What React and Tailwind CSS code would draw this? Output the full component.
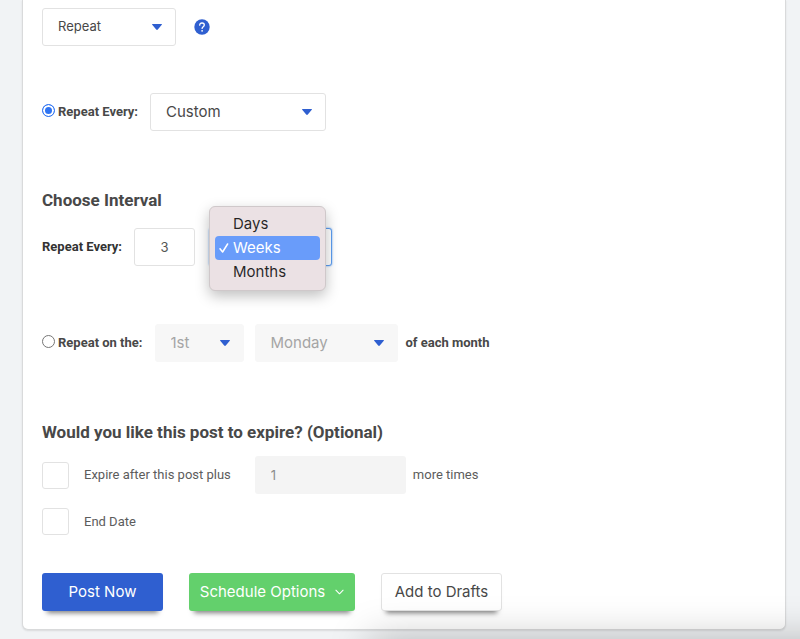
import { useState } from 'react';
import clsx from 'clsx';

const INTERVALS = ['Days', 'Weeks', 'Months'];

const Caret = () => (
  <svg
    viewBox="0 0 10 6"
    className="w-[10px] h-[6px] absolute right-[14px] top-4 pointer-events-none fill-[#2f5fd0]"
    aria-hidden="true"
  >
    <path d="M0.5 0h9c.5 0 .6.5.3.8L5.8 5.5c-.5.5-1.100.5-1.600 0L.2.8C-.1.5 0 0 .5 0z" />
  </svg>
);

const Select = ({ label, className, options, ...props }) => (
  <div className={clsx('relative h-[38px]', className)}>
    <select
      aria-label={label}
      className="appearance-none w-full h-full pl-[15px] pr-6 rounded-[3px] border border-[#e2e2e2] bg-white text-[#484848] focus:outline-none disabled:border-[#f7f7f7] disabled:bg-[#f7f7f7] disabled:text-[#a5a5a5] disabled:opacity-100"
      {...props}
    >
      {options.map((option) => (
        <option key={option}>{option}</option>
      ))}
    </select>
    <Caret />
  </div>
);

const RadioLabel = ({ children, ...props }) => (
  <label className="flex items-center gap-[3px] text-[13px] font-bold text-[#484848]">
    <input
      type="radio"
      name="repeat"
      className="appearance-none w-[13px] h-[13px] mb-[3px] rounded-full border border-[#767676] bg-white checked:border-[#2f74f2] checked:bg-[#2f74f2] checked:shadow-[inset_0_0_0_2px_#fff]"
      {...props}
    />
    {children}
  </label>
);

const CheckLabel = ({ children }) => (
  <label className="flex items-center gap-[15px] text-[13px] text-[#5c5c5c]">
    <input
      type="checkbox"
      className="appearance-none w-[27px] h-[27px] rounded-[3px] border border-[#e2e2e2] bg-white checked:bg-[#2f5fd0]"
    />
    {children}
  </label>
);

const IntervalMenu = ({ value, onChange }) => (
  <ul
    role="listbox"
    aria-label="Interval"
    className="absolute left-0 -top-[22px] w-[117px] h-[85px] p-[5px] rounded-md bg-[#ebe1e4] border border-[#cfc8ca] shadow-[0_5px_14px_rgba(0,0,0,0.25)] text-black/85"
  >
    {INTERVALS.map((item) => (
      <li
        key={item}
        role="option"
        aria-selected={item === value}
        onClick={() => onChange(item)}
        className={clsx(
          'relative flex items-center h-6 pl-[18px] rounded-[4px]',
          item === value && 'bg-[#699cfa] text-white'
        )}
      >
        {item === value && (
          <svg viewBox="0 0 10 10" className="w-[10px] h-[10px] absolute left-1" fill="none" stroke="currentColor" strokeWidth="1.500" strokeLinecap="round" strokeLinejoin="round">
            <path d="M1 5.800L3.600 9 8.600 1" />
          </svg>
        )}
        {item}
      </li>
    ))}
  </ul>
);

const App = () => {
  const [mode, setMode] = useState('every');
  const [interval, setInterval] = useState('Weeks');

  return (
    <div className="relative min-h-screen overflow-hidden pl-[22px] pr-[14px] pb-[9px] bg-[#f1f3f5] font-[Roboto,sans-serif] text-[15px]">
      <form className="pt-2 pb-[18px] pl-[19px] pr-4 bg-white border border-t-0 border-[#d9dadb] rounded-b-md shadow-[0_1px_2px_rgba(0,0,0,0.1)]">
        <div className="flex items-center gap-[18px] font-[Inter,sans-serif]">
          <Select label="Post schedule" className="w-[134px] text-[13px]" options={['Repeat', 'Once']} />
          <button type="button" aria-label="Help">
            <svg viewBox="0 0 16 16" className="w-4 h-4">
              <circle cx="8" cy="8" r="7.700" fill="#2f5fd0" />
              <path d="M5.700 6.200c0-1.400 1-2.200 2.300-2.200s2.300.8 2.300 2c0 1.700-2.200 1.700-2.200 3.400" fill="none" stroke="#fff" strokeWidth="1.300" strokeLinecap="round" />
              <circle cx="8.100" cy="11.800" r="0.900" fill="#fff" />
            </svg>
          </button>
        </div>

        <div className="flex items-center gap-3 mt-[47px]">
          <RadioLabel checked={mode === 'every'} onChange={() => setMode('every')}>
            Repeat Every:
          </RadioLabel>
          <Select
            label="Repeat frequency"
            className="w-[176px] font-[Inter,sans-serif]"
            options={['Custom', 'Daily', 'Weekly']}
          />
        </div>

        <h2 className="mt-[57px] text-[17px] leading-6 font-bold text-[#484848]">Choose Interval</h2>
        <div className="flex items-center mt-4">
          <label htmlFor="count" className="text-[13px] font-bold text-[#333]">
            Repeat Every:
          </label>
          <input
            id="count"
            defaultValue="3"
            className="w-[61px] h-[38px] ml-3 mr-[14px] rounded-[3px] border border-[#e2e2e2] text-center text-[13px] text-[#555] font-[Inter,sans-serif]"
          />
          <div className="relative font-[Inter,sans-serif]">
            <select
              aria-label="Interval unit"
              value={interval}
              onChange={(e) => setInterval(e.target.value)}
              className="appearance-none block w-[123px] h-[38px] pl-[15px] rounded-[3px] border border-[#5b9cf0] bg-white shadow-[0_0_2px_#5b9cf0]"
            >
              {INTERVALS.map((item) => (
                <option key={item}>{item}</option>
              ))}
            </select>
            <IntervalMenu value={interval} onChange={setInterval} />
          </div>
        </div>

        <div className="flex items-center mt-[58px]">
          <RadioLabel checked={mode === 'month'} onChange={() => setMode('month')}>
            Repeat on the:
          </RadioLabel>
          <div className="flex gap-[11px] ml-3 mr-2 font-[Inter,sans-serif]">
            <Select label="Week of month" className="w-[89px]" options={['1st', '2nd', '3rd']} disabled={mode !== 'month'} />
            <Select label="Weekday" className="w-[143px]" options={['Monday', 'Tuesday']} disabled={mode !== 'month'} />
          </div>
          <span className="text-[13px] font-bold text-[#484848]">of each month</span>
        </div>

        <h2 className="mt-[58px] text-[17px] leading-6 font-bold text-[#484848]">
          Would you like this post to expire? (Optional)
        </h2>
        <div className="flex items-center mt-3">
          <CheckLabel>Expire after this post plus</CheckLabel>
          <input
            aria-label="Number of times"
            defaultValue="1"
            disabled
            className="w-[151px] h-[38px] ml-6 mr-[7px] pl-4 rounded-[3px] bg-[#f4f4f4] text-[13px] text-[#8c8c8c] font-[Inter,sans-serif]"
          />
          <span className="text-[13px] text-[#5c5c5c]">more times</span>
        </div>
        <div className="flex mt-[14px]">
          <CheckLabel>End Date</CheckLabel>
        </div>

        <div className="flex mt-[38px] gap-[26px] font-[Inter,sans-serif]">
          <button
            type="button"
            className="w-[121px] h-[38px] rounded-[3px] bg-[#2f5fd0] text-white shadow-[0_7px_5px_-5px_rgba(0,0,0,0.5)]"
          >
            Post Now
          </button>
          <button
            type="button"
            className="flex items-center justify-center gap-[10px] w-[166px] h-[38px] rounded-[3px] bg-[#63d06c] text-white shadow-[0_7px_5px_-5px_rgba(0,0,0,0.5)]"
          >
            Schedule Options
            <svg viewBox="0 0 10 6" className="w-[9px] h-[6px]" fill="none" stroke="currentColor" strokeWidth="1.200" strokeLinecap="round" strokeLinejoin="round">
              <path d="M1 1l4 4 4-4" />
            </svg>
          </button>
          <button
            type="button"
            className="w-[121px] h-[38px] rounded-[3px] border border-[#e2e2e2] bg-white text-[#484848] shadow-[0_7px_5px_-5px_rgba(0,0,0,0.5)]"
          >
            Add to Drafts
          </button>
        </div>
      </form>
      <div className="absolute left-[370px] -right-20 top-full h-20 pointer-events-none shadow-[0_0_40px_rgba(0,0,0,0.25)]" />
    </div>
  );
};

export default App;
